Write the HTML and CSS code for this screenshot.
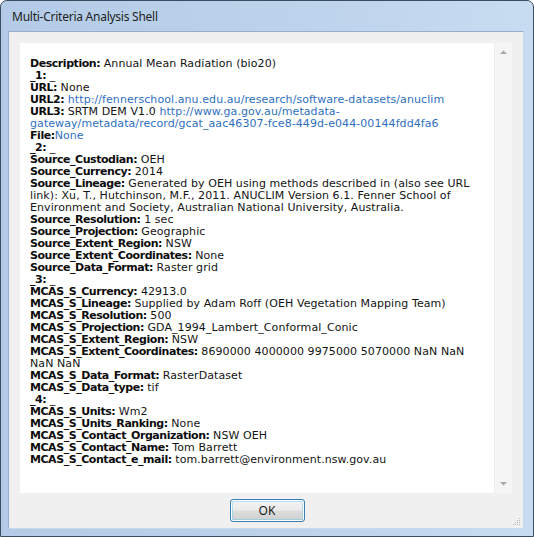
FILE: index.html
```html
<!DOCTYPE html>
<html>
<head>
<meta charset="utf-8">
<link rel="stylesheet" href="styles.css">
</head>
<body>
<div class="window">
  <div class="titlebar">Multi-Criteria Analysis Shell</div>
  <div class="client">
    <div class="textbox">
      <div class="content">
        <div><b>Description:</b> Annual Mean Radiation (bio20)</div>
        <div><b>_1:</b> _</div>
        <div><b>URL:</b> None</div>
        <div><b>URL2:</b> <span class="link">http://fennerschool.anu.edu.au/research/software-datasets/anuclim</span></div>
        <div><b>URL3:</b> SRTM DEM V1.0 <span class="link">http://www.ga.gov.au/metadata-<br>gateway/metadata/record/gcat_aac46307-fce8-449d-e044-00144fdd4fa6</span></div>
        <div><b>File:</b><span class="link">None</span></div>
        <div><b>_2:</b> _</div>
        <div><b>Source_Custodian:</b> OEH</div>
        <div><b>Source_Currency:</b> 2014</div>
        <div><b>Source_Lineage:</b> Generated by OEH using methods described in (also see URL<br>link): Xu, T., Hutchinson, M.F., 2011. ANUCLIM Version 6.1. Fenner School of<br>Environment and Society, Australian National University, Australia.</div>
        <div><b>Source_Resolution:</b> 1 sec</div>
        <div><b>Source_Projection:</b> Geographic</div>
        <div><b>Source_Extent_Region:</b> NSW</div>
        <div><b>Source_Extent_Coordinates:</b> None</div>
        <div><b>Source_Data_Format:</b> Raster grid</div>
        <div><b>_3:</b> _</div>
        <div><b>MCAS_S_Currency:</b> 42913.0</div>
        <div><b>MCAS_S_Lineage:</b> Supplied by Adam Roff (OEH Vegetation Mapping Team)</div>
        <div><b>MCAS_S_Resolution:</b> 500</div>
        <div><b>MCAS_S_Projection:</b> GDA_1994_Lambert_Conformal_Conic</div>
        <div><b>MCAS_S_Extent_Region:</b> NSW</div>
        <div><b>MCAS_S_Extent_Coordinates:</b> 8690000 4000000 9975000 5070000 NaN NaN<br>NaN NaN</div>
        <div><b>MCAS_S_Data_Format:</b> RasterDataset</div>
        <div><b>MCAS_S_Data_type:</b> tif</div>
        <div><b>_4:</b> _</div>
        <div><b>MCAS_S_Units:</b> Wm2</div>
        <div><b>MCAS_S_Units_Ranking:</b> None</div>
        <div><b>MCAS_S_Contact_Organization:</b> NSW OEH</div>
        <div><b>MCAS_S_Contact_Name:</b> Tom Barrett</div>
        <div><b>MCAS_S_Contact_e_mail:</b> tom.barrett@environment.nsw.gov.au</div>
      </div>
      <div class="scrollbar">
        <svg class="arrow" width="17" height="17" viewBox="0 0 17 17"><path d="M5 10 L8.5 6.5 L12 10 Z" fill="#a8a8a8"/></svg>
        <svg class="arrow" width="17" height="17" viewBox="0 0 17 17"><path d="M5 7 L8.5 10.5 L12 7 Z" fill="#a8a8a8"/></svg>
      </div>
    </div>
    <div class="footer">
      <button class="ok">OK</button>
    </div>
    <svg class="grip" width="8" height="8" viewBox="0 0 8 8">
      <rect x="6" y="0" width="1" height="1" fill="#b8b8b8"/>
      <rect x="4" y="2" width="1" height="1" fill="#b8b8b8"/>
      <rect x="6" y="2" width="1" height="1" fill="#b8b8b8"/>
      <rect x="2" y="4" width="1" height="1" fill="#b8b8b8"/>
      <rect x="4" y="4" width="1" height="1" fill="#b8b8b8"/>
      <rect x="6" y="4" width="1" height="1" fill="#b8b8b8"/>
      <rect x="0" y="6" width="1" height="1" fill="#b8b8b8"/>
      <rect x="2" y="6" width="1" height="1" fill="#b8b8b8"/>
      <rect x="4" y="6" width="1" height="1" fill="#b8b8b8"/>
      <rect x="6" y="6" width="1" height="1" fill="#b8b8b8"/>
    </svg>
  </div>
</div>
</body>
</html>
```

FILE: styles.css
```css
html, body {
  margin: 0;
  padding: 0;
  background: #ffffff;
}

.window {
  box-sizing: border-box;
  width: 534px;
  height: 537px;
  border: 1px solid #3b4d60;
  border-radius: 7px 7px 0 0;
  background: linear-gradient(90deg, #b3cbe7 0%, #bed4ec 60%, #c8dcf1 100%);
  padding: 0 9px 7px 7px;
  display: flex;
  flex-direction: column;
}

.titlebar {
  height: 30px;
  box-sizing: border-box;
  padding: 7px 0 0 4px;
  font-family: "Noto Sans", "Open Sans", sans-serif;
  font-size: 12px;
  letter-spacing: -0.25px;
  color: #1e1e1e;
  flex: none;
}

.client {
  position: relative;
  flex: 1;
  background: #f0f0f0;
  border: 1px solid #95aecb;
  border-right-color: #c9d9ec;
  border-bottom-color: #c9d9ec;
  display: flex;
  flex-direction: column;
  padding: 11px 11px 0 11px;
}

.textbox {
  height: 450px;
  display: flex;
  background: #ffffff;
  flex: none;
}

.content {
  flex: 1;
  padding: 15px 0 0 10px;
  font-family: "DejaVu Sans", Verdana, sans-serif;
  font-size: 11px;
  line-height: 12px;
  letter-spacing: 0.08px;
  color: #141414;
  white-space: nowrap;
}

.content b {
  font-weight: bold;
  letter-spacing: -0.45px;
  color: #0c0c0c;
}

.link {
  color: #2f6fbe;
}

.scrollbar {
  width: 17px;
  background: #f5f5f5;
  border-left: 1px solid #ececec;
  display: flex;
  flex-direction: column;
  justify-content: space-between;
  padding: 1px 0 1px 0;
}

.arrow {
  display: block;
}

.footer {
  display: flex;
  justify-content: center;
  padding-top: 6px;
}

.ok {
  width: 75px;
  height: 23px;
  box-sizing: border-box;
  border: 1px solid #3c7fb1;
  border-radius: 3px;
  background: linear-gradient(180deg, #f2f2f2 0%, #ebebeb 48%, #dddddd 52%, #cfcfcf 100%);
  box-shadow: inset 0 0 0 1px #f9fcfe, inset 0 0 0 2px rgba(72, 200, 250, 0.35);
  font-family: "Noto Sans", "Open Sans", sans-serif;
  font-size: 12px;
  color: #1a1a1a;
  padding: 0;
  margin-left: 2px;
}

.grip {
  position: absolute;
  right: 2px;
  bottom: 2px;
}
```
